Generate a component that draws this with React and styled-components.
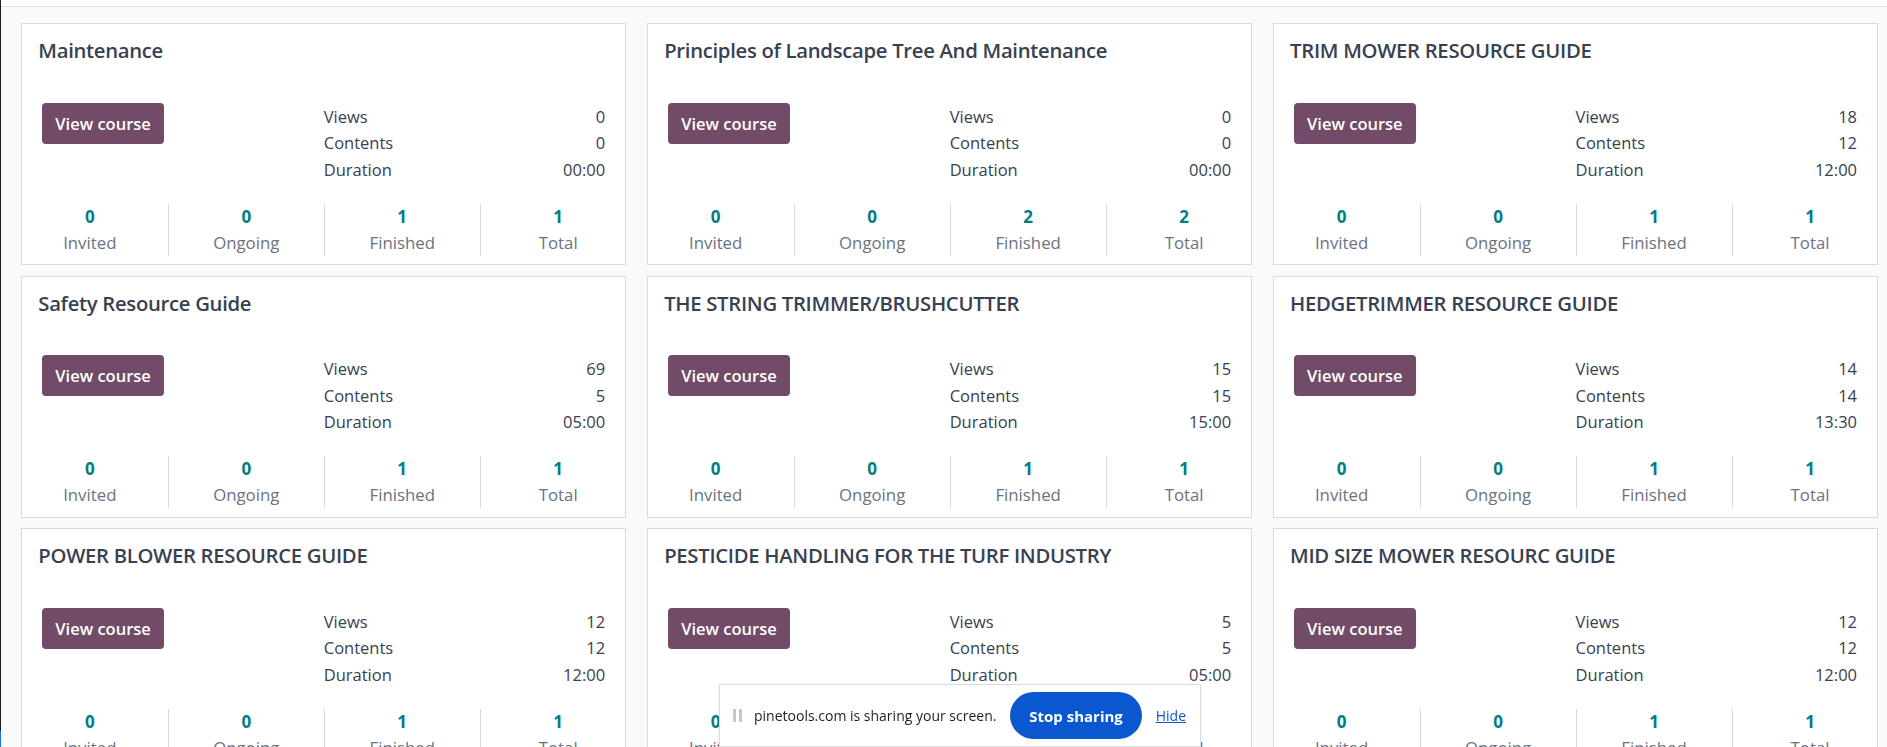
import React from "react";
import styled, { createGlobalStyle } from "styled-components";

const GlobalStyle = createGlobalStyle`
  html, body { margin: 0; padding: 0; }
  body {
    background: #f9fafb;
    font-family: "Open Sans", "Noto Sans", sans-serif;
    color: #374151;
  }
`;

const Frame = styled.div`
  height: 100vh;
  overflow: hidden;
  display: flex;
  flex-direction: column;
  border-left: 1px solid #1f1f1f;
  border-image: linear-gradient(to bottom, #1f1f1f calc(100% - 17px), #1a73e8 calc(100% - 17px)) 1;
  box-sizing: border-box;
`;

const TopBar = styled.div`
  height: 6px;
  flex: none;
  background: #ffffff;
  border-bottom: 1px solid #dee2e6;
`;

const Grid = styled.div`
  display: grid;
  grid-template-columns: repeat(3, 1fr);
  column-gap: 21px;
  row-gap: 10.5px;
  padding: 16.3px 9px 0 20.3px;
`;

const Card = styled.div`
  background: #ffffff;
  border: 1px solid #d8dadd;
  padding: 14px 16px 8.2px;
  min-width: 0;
`;

const Title = styled.div`
  font-size: 20.3px;
  line-height: 24px;
  font-weight: 600;
  color: #374151;
  white-space: nowrap;
  letter-spacing: -0.3px;
`;

const Body = styled.div`
  display: grid;
  grid-template-columns: 1fr 1fr;
  align-items: start;
  margin-top: 40.7px;
  padding: 0 4px;
`;

const ViewButton = styled.button`
  justify-self: start;
  height: 41px;
  padding: 0 13px;
  border: none;
  border-radius: 4px;
  background: #714b67;
  color: #ffffff;
  font-family: "Open Sans", "Noto Sans", sans-serif;
  font-size: 16.5px;
  font-weight: 600;
  cursor: pointer;
`;

const Stats = styled.div`
  display: flex;
  flex-direction: column;
  padding-top: 1px;
`;

const StatRow = styled.div`
  display: flex;
  justify-content: space-between;
  font-size: 16.5px;
  line-height: 26.5px;
  color: #374151;
`;

const Counters = styled.div`
  display: grid;
  grid-template-columns: repeat(4, 1fr);
  margin: 20.5px -26.5px 0;
`;

const Counter = styled.div`
  display: flex;
  flex-direction: column;
  align-items: center;
  border-left: ${(p) => (p.$first ? "none" : "1px solid #d8dadd")};
`;

const CounterValue = styled.span`
  font-size: 17px;
  line-height: 26px;
  font-weight: 700;
  color: #017e84;
`;

const CounterLabel = styled.span`
  font-size: 16.8px;
  line-height: 26px;
  color: #6b7280;
`;

const SharePopup = styled.div`
  position: fixed;
  left: 719px;
  top: 684px;
  width: 482px;
  height: 63px;
  box-sizing: border-box;
  display: flex;
  align-items: center;
  padding: 0 14px 0 12.5px;
  background: #ffffff;
  border: 1px solid #dadce0;
  box-shadow: 0 1px 3px rgba(0, 0, 0, 0.12);
  font-family: "Open Sans", "Noto Sans", sans-serif;
`;

const Grip = styled.div`
  display: flex;
  gap: 3px;
  flex: none;
`;

const GripBar = styled.span`
  display: block;
  width: 3px;
  height: 13px;
  background: #c7c7c7;
`;

const ShareText = styled.span`
  margin-left: 12.5px;
  font-size: 14px;
  color: #1f1f1f;
  white-space: nowrap;
`;

const StopButton = styled.button`
  margin-left: 14px;
  height: 47px;
  width: 133px;
  border: none;
  border-radius: 24px;
  background: #0b57d0;
  color: #ffffff;
  font-family: "Open Sans", "Noto Sans", sans-serif;
  font-size: 15px;
  font-weight: 700;
  cursor: pointer;
`;

const HideLink = styled.a`
  margin-left: 14px;
  font-size: 14px;
  color: #0b57d0;
  text-decoration: underline;
  cursor: pointer;
`;

const courses = [
  { title: "Maintenance", views: 0, contents: 0, duration: "00:00", c: [0, 0, 1, 1] },
  { title: "Principles of Landscape Tree And Maintenance", views: 0, contents: 0, duration: "00:00", c: [0, 0, 2, 2] },
  { title: "TRIM MOWER RESOURCE GUIDE", views: 18, contents: 12, duration: "12:00", c: [0, 0, 1, 1] },
  { title: "Safety Resource Guide", views: 69, contents: 5, duration: "05:00", c: [0, 0, 1, 1] },
  { title: "THE STRING TRIMMER/BRUSHCUTTER", views: 15, contents: 15, duration: "15:00", c: [0, 0, 1, 1] },
  { title: "HEDGETRIMMER RESOURCE GUIDE", views: 14, contents: 14, duration: "13:30", c: [0, 0, 1, 1] },
  { title: "POWER BLOWER RESOURCE GUIDE", views: 12, contents: 12, duration: "12:00", c: [0, 0, 1, 1] },
  { title: "PESTICIDE HANDLING FOR THE TURF INDUSTRY", views: 5, contents: 5, duration: "05:00", c: [0, 0, 1, 1] },
  { title: "MID SIZE MOWER RESOURC GUIDE", views: 12, contents: 12, duration: "12:00", c: [0, 0, 1, 1] },
];

const labels = ["Invited", "Ongoing", "Finished", "Total"];

function CourseCard({ course }) {
  return (
    <Card>
      <Title>{course.title}</Title>
      <Body>
        <ViewButton>View course</ViewButton>
        <Stats>
          <StatRow><span>Views</span><span>{course.views}</span></StatRow>
          <StatRow><span>Contents</span><span>{course.contents}</span></StatRow>
          <StatRow><span>Duration</span><span>{course.duration}</span></StatRow>
        </Stats>
      </Body>
      <Counters>
        {labels.map((l, i) => (
          <Counter key={l} $first={i === 0}>
            <CounterValue>{course.c[i]}</CounterValue>
            <CounterLabel>{l}</CounterLabel>
          </Counter>
        ))}
      </Counters>
    </Card>
  );
}

export default function App() {
  return (
    <>
      <GlobalStyle />
      <Frame>
        <TopBar />
        <Grid>
          {courses.map((c) => (
            <CourseCard key={c.title} course={c} />
          ))}
        </Grid>
      </Frame>
      <SharePopup>
        <Grip>
          <GripBar />
          <GripBar />
        </Grip>
        <ShareText>pinetools.com is sharing your screen.</ShareText>
        <StopButton>Stop sharing</StopButton>
        <HideLink>Hide</HideLink>
      </SharePopup>
    </>
  );
}
